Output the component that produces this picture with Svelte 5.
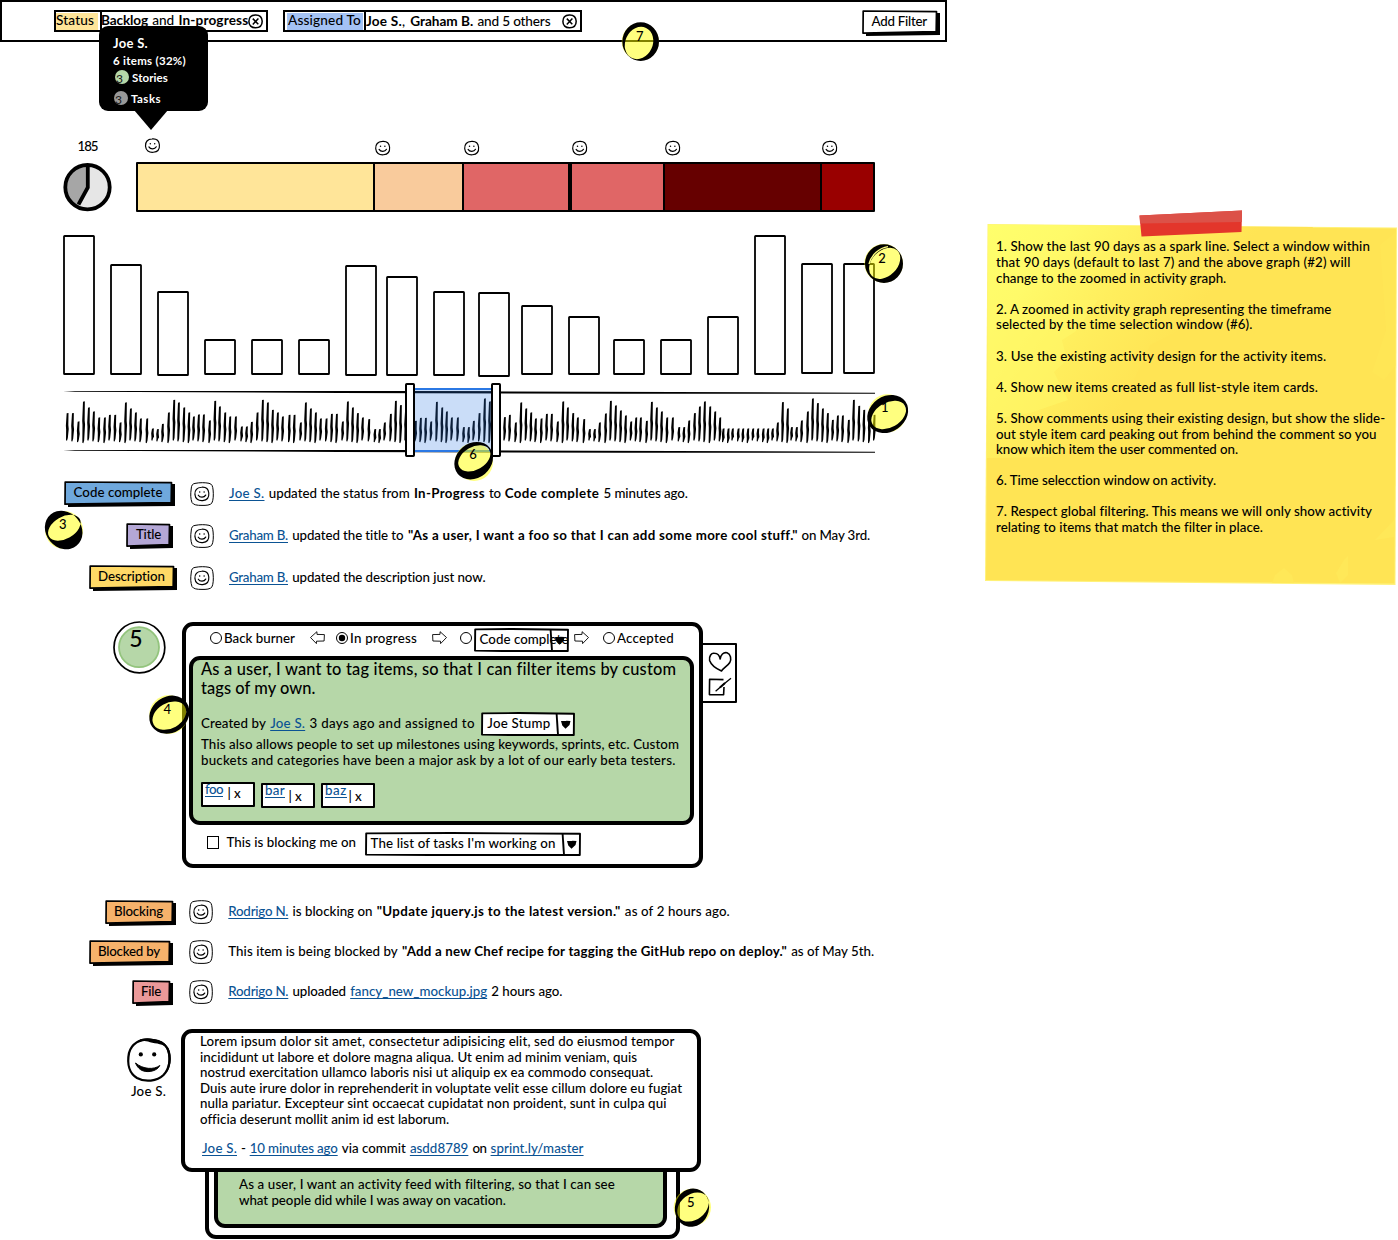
<script>
  // Spreads the letters of a run so that it spans the given width.
  function fit(node, width) {
    const apply = (w) => {
      node.style.letterSpacing = '0px';
      const range = document.createRange();
      range.selectNodeContents(node);
      const natural = range.getBoundingClientRect().width;
      node.style.letterSpacing = `${(w - natural) / Math.max(1, node.textContent.length)}px`;
    };
    apply(width);
    return { update: apply };
  }

  const segments = [
    { w: 237, color: '#ffe599' },
    { w: 89, color: '#f9cb9c' },
    { w: 108, color: '#e06666', thick: true },
    { w: 93, color: '#e06666' },
    { w: 157, color: '#660000' },
    { w: 51, color: '#990000' },
  ];
  const faces = [[16.5, 7.5], [246.7, 10], [335.7, 10], [443.7, 10], [536.7, 10], [693.7, 10]];

  // Columns of the zoomed graph: left, top, bottom
  const columns = [
    [0, 0, 140], [47, 29, 140], [94, 56, 141], [141, 104, 140], [188, 104, 140], [235, 104, 140],
    [282, 30, 141], [323, 41, 141], [370, 56, 141], [415, 57, 142], [458, 70, 140], [505, 81, 140],
    [550, 104, 140], [597, 104, 140], [644, 81, 140], [691, 0, 140], [738, 28, 139], [780, 28, 139],
  ];

  // Spark line ticks: x and top, in thirds of a pixel
  const early = [
    [82,580],[98,580],[115,605],[131,545],[146,563],[161,575],[177,593],[194,593],[209,585],[225,585],[241,608],[257,548],[272,566],[287,578],[302,596],[321,596],[338,626],[353,628],[368,612],[386,578],[402,540],[416,548],[432,563],[447,578],[461,590],[476,584],[491,584],[509,602],[525,543],[539,560],[555,578],[570,590],[587,590],[605,620],[620,620],[635,606],[652,578],[668,540],[683,548],[698,570],[713,578],[728,590],[748,585],[763,585],[782,608],[797,548],[812,566],[827,578],[842,596],[859,596],[875,582],[890,582],[908,605],[923,545],[938,563],[953,580],[968,593],[987,598],[1005,628],[1019,628],[1034,608],[1052,582],[1067,543],[1082,556],[1097,575],[1127,603],[1142,594],[1157,594],[1173,605],[1190,546],[1206,563],[1220,575],[1235,593],[1253,593],[1271,622],[1286,622],[1301,603],[1318,580],[1334,536],[1349,545],
  ];
  const late = [
    [104,592],[119,585],[137,608],[153,548],[168,566],[183,578],[197,596],[214,596],[230,582],[245,582],[263,605],[279,545],[293,563],[309,580],[323,593],[342,598],[359,628],[374,628],[389,608],[407,581],[422,543],[437,557],[452,572],[467,587],[483,605],[498,593],[512,593],[530,603],[545,546],[560,563],[575,575],[591,593],[608,593],[627,622],[642,622],[657,602],[674,580],[689,560],[704,545],[720,560],[735,575],[750,593],[760,626],[775,626],[788,626],[805,626],[819,626],[834,626],[849,626],[864,626],[880,626],[894,626],[908,626],[923,608],[938,547],[953,566],[965,622],[980,622],[995,602],[1013,575],[1028,536],[1043,550],[1058,566],[1073,580],[1088,600],[1103,587],[1118,587],[1136,600],[1151,540],[1167,558],[1182,570],[1198,585],[1213,585],
  ];
  const ticks = [...early, ...late.map(([x, y]) => [x + 1290, y])];
  // A pen stroke: fuller in the middle, thin at the foot
  const tick = ([x, top], i) => {
    const end = 662 + (i % 4) * 2.5;
    const mid = (top + end) / 2;
    return `M${x - 2} ${top}L${x + 3.5} ${top - 1}L${x + 3} ${mid - 6}L${x + 4.2} ${mid + 6}L${x + 1.5} ${end - 8}L${x - 1} ${end}L${x - 4} ${end - 1}L${x - 3.6} ${mid + 8}L${x - 4.4} ${mid - 4}Z`;
  };

  const recent = [
    { tag: 'Code complete', tw: 89, tx: 9.5, x: 64, w: 111, color: '#6fa8dc', runs: [['Joe S.', 35.5, 'a'], ['updated the status from', 141], ['In-Progress', 71, 'b'], ['to', 11.5], ['Code complete', 94.5, 'b'], ['5 minutes ago.', 84.5]] },
    { tag: 'Title', tw: 25, tx: 10, x: 126, w: 47, color: '#b4a7d6', runs: [['Graham B.', 59, 'a'], ['updated the title to', 111.5], ['"As a user, I want a foo so that I can add some more cool stuff."', 389.5, 'b'], ['on May 3rd.', 68.5]] },
    { tag: 'Description', tw: 67, tx: 9, x: 89, w: 88, color: '#ffd966', runs: [['Graham B.', 59, 'a'], ['updated the description just now.', 193.5]] },
  ];
  const older = [
    { tag: 'Blocking', tw: 49, tx: 9, x: 105, w: 71, color: '#f6b26b', runs: [['Rodrigo N.', 60, 'a'], ['is blocking on', 80], ['"Update jquery.js to the latest version."', 244, 'b'], ['as of 2 hours ago.', 105]] },
    { tag: 'Blocked by', tw: 62, tx: 9, x: 89, w: 84, color: '#f6b26b', runs: [['This item is being blocked by', 169.5], ['"Add a new Chef recipe for tagging the GitHub repo on deploy."', 385, 'b'], ['as of May 5th.', 83]] },
    { tag: 'File', tw: 20, tx: 9, x: 132, w: 41, color: '#ea9999', runs: [['Rodrigo N.', 60, 'a'], ['uploaded', 53.5], ['fancy_new_mockup.jpg', 137, 'a'], ['2 hours ago.', 71]] },
  ];

  const notes = [
    [['1. Show the last 90 days as a spark line. Select a window within', 374], ['that 90 days (default to last 7) and the above graph (#2) will', 354.5], ['change to the zoomed in activity graph.', 230.5]],
    [['2. A zoomed in activity graph representing the timeframe', 336], ['selected by the time selection window (#6).', 257]],
    [['3. Use the existing activity design for the activity items.', 331]],
    [['4. Show new items created as full list-style item cards.', 322]],
    [['5. Show comments using their existing design, but show the slide-', 389.5], ['out style item card peaking out from behind the comment so you', 380.5], ['know which item the user commented on.', 242]],
    [['6. Time selecction window on activity.', 220.5]],
    [['7. Respect global filtering. This means we will only show activity', 376], ['relating to items that match the filter in place.', 267]],
  ];

  const lorem = [
    ['Lorem ipsum dolor sit amet, consectetur adipisicing elit, sed do eiusmod tempor', 474.5],
    ['incididunt ut labore et dolore magna aliqua. Ut enim ad minim veniam, quis', 437],
    ['nostrud exercitation ullamco laboris nisi ut aliquip ex ea commodo consequat.', 453.5],
    ['Duis aute irure dolor in reprehenderit in voluptate velit esse cillum dolore eu fugiat', 482],
    ['nulla pariatur. Excepteur sint occaecat cupidatat non proident, sunt in culpa qui', 466.5],
    ['officia deserunt mollit anim id est laborum.', 248.5],
  ];
  const commit = [['Joe S.', 35, 'a'], ['-', 4.5], ['10 minutes ago', 88, 'a'], ['via commit', 64], ['asdd8789', 58.5, 'a'], ['on', 14], ['sprint.ly/master', 93, 'a']];

  const tags = [
    { name: 'foo', w: 18, gap: 4.5, x: 13, drop: 4, top: 0 },
    { name: 'bar', w: 20, gap: 3.5, x: 13, drop: 6, top: 1 },
    { name: 'baz', w: 22, gap: 1.5, x: 13, drop: 6, top: 1 },
  ];

  // Numbered callouts in thirds of a pixel; ellipses are cx, cy, rx, ry, rotation
  const callouts = [
    { n: 7, left: 620, top: 20, box: [240, 60], c: [301, 125, 56], t: [299, 122], outer: [302, 125, 55, 58, 0], inner: [297, 129, 41, 50, 25] },
    { n: 2, left: 863, top: 243, box: [1179, 69], c: [1241, 130, 58], t: [1236, 129], outer: [1242, 131, 57, 58, 0], inner: [1244, 130, 54, 38, -45], extra: 'M1201 136C1208 108 1232 88 1258 84' },
    { n: 1, left: 867, top: 393, box: [1191, 519], c: [1252, 580, 57], t: [1244, 576], outer: [1253, 582, 65, 53, -35], inner: [1256, 585, 56, 37, -30] },
    { n: 6, left: 454, top: 441, box: [-48, 663], c: [12, 726, 57], t: [9, 718], outer: [11, 722, 62, 52, -40], inner: [13, 715, 52, 34, -30] },
    { n: 3, left: 44, top: 509, box: [12, 117], c: [72, 180, 57], t: [68, 177], outer: [71, 180, 61, 53, -130], inner: [73, 173, 53, 33, -30] },
    { n: 4, left: 148, top: 694, box: [24, 42], c: [86, 104, 58], t: [82, 101], outer: [88, 104, 63, 54, -35], inner: [88, 107, 54, 38, -30] },
    { n: 5, left: 671, top: 1187, box: [633, 501], c: [697, 562, 56], t: [692, 560], outer: [696, 563, 51, 58, 15], inner: [699, 561, 52, 38, -38] },
  ];
  const ellipse = ([cx, cy, rx, ry, rot]) => {
    const a = (rot * Math.PI) / 180;
    const dx = rx * Math.cos(a);
    const dy = rx * Math.sin(a);
    return `M${cx - dx} ${cy - dy}A${rx} ${ry} ${rot} 1 0 ${cx + dx} ${cy + dy}A${rx} ${ry} ${rot} 1 0 ${cx - dx} ${cy - dy}Z`;
  };
</script>

{#snippet run(text, w, kind)}
  <span class="run" class:bold={kind === 'b'} class:link={kind === 'a'} style:width="{w}px" use:fit={w}>{text}</span>
{/snippet}

{#snippet button(text, tw, tx, w, color)}
  <div class="sketch" style:width="{w}px">
    <svg width={w} height="26" viewBox="0 0 {w} 26">
      <path d="M4 21L{w - 4} 20L{w - 4} 3L{w} 3L{w} 25L4 26Z" />
      <path d="M1.2 1L{w - 3.5} 1.6L{w - 3.8} 21.6L1 23.2Z" fill={color} stroke="#000" stroke-width="1.7" stroke-linejoin="round" />
    </svg>
    <span class="sketch-text" style:padding-left="{tx}px">{@render run(text, tw)}</span>
  </div>
{/snippet}

{#snippet select(text, tw, w)}
  <div class="sketch select" style:width="{w}px">
    <svg width={w} height="24" viewBox="0 0 {w} 24">
      <path d="M1.2 1.4L{w * 0.4} 1L{w - 1} 1.8L{w - 1.2} 23L{w * 0.3} 23L1 22.6Z" fill="#fff" stroke="#000" stroke-width="1.9" stroke-linejoin="round" />
      <path d="M{w - 18.4} 1.5L{w - 17} 23" stroke="#000" stroke-width="1.9" />
      <path d="M{w - 14} 9C{w - 12} 8.6 {w - 10} 9.6 {w - 8.5} 8.8L{w - 4.5} 9L{w - 5.5} 13L{w - 9.5} 16.8L{w - 12.7} 13.5Z" />
    </svg>
    <span class="sketch-text">{@render run(text, tw)}</span>
  </div>
{/snippet}

{#snippet face()}
  <path d="M7.2.8C11.4.4 14 2.4 14.5 6.6C14.9 11 12.4 13.8 8.4 14.2C4 14.6 1 12.4.6 8C.4 3.4 3 1.1 7.2.8Z" fill="#fff" stroke="#000" stroke-width="1.15" />
  <circle cx="5.4" cy="5.7" r=".75" /><circle cx="9.8" cy="5.7" r=".75" />
  <path d="M4 8.8C5.5 11.3 9.8 11.5 11.4 8.7" fill="none" stroke="#000" stroke-width="1.2" stroke-linecap="round" />
{/snippet}

{#snippet activity(items)}
  {#each items as item}
    <div class="activity">
      <div class="tag-cell" style:padding-left="{item.x}px">
        {@render button(item.tag, item.tw, item.tx, item.w, item.color)}
      </div>
      <svg class="portrait" width="24" height="24" viewBox="0 0 24 24">
        <path d="M5 1.4C10 .4 15 .5 19 1.3C22 2 22.7 4 23.1 8C23.6 13 23.3 18 22 20.8C20.5 23.3 16 23.5 12 23.4C7 23.4 3.5 23 2 20.5C.6 17 .4 12 1.2 7C1.4 3.5 2.2 1.9 5 1.4Z" fill="#fff" stroke="#000" stroke-width="1" />
        <g transform="translate(4.3 4.4)">{@render face()}</g>
      </svg>
      <p class="runs">{#each item.runs as [t, w, k]}{@render run(t, w, k)}{/each}</p>
    </div>
  {/each}
{/snippet}

{#snippet radio(on)}
  <svg class="radio" width="12" height="14" viewBox="0 0 12 14">
    <circle cx="6" cy="7" r="5.5" fill="#fff" stroke="#000" />
    {#if on}<circle cx="6" cy="7" r="3.2" />{/if}
  </svg>
{/snippet}

{#snippet arrow(flip)}
  <svg class="arrow" class:flip width="15" height="14" viewBox="0 0 15 14">
    <path d="M.6 3.6L8 3.4L8.1.7L14.5 6.5L8.6 12.6L8.5 10.2L.9 10Z" fill="#fff" stroke="#000" stroke-width=".9" />
  </svg>
{/snippet}

{#snippet close()}
  <svg class="close" width="15" height="15" viewBox="0 0 15 15">
    <path d="M7.2.9C11.6.7 14 3 14.2 7.2C14.2 11.4 11.6 13.7 7.6 13.8C3.4 13.9.9 11.4.9 7.4C.9 3.4 3.2 1.1 7.2.9Z" fill="#fff" stroke="#000" stroke-width="1.5" />
    <path d="M4.8 4.6L10.3 10.2M10.4 4.4L4.8 10.4" stroke="#000" stroke-width="1.5" />
  </svg>
{/snippet}

<div class="page">
  <main>
    <header>
      <div class="filter status">
        <span class="label">{@render run('Status', 38)}</span>
        <i class="divider"></i>
        <span class="value">{@render run('Backlog', 47, 'b')}{@render run('and', 22)}{@render run('In-progress', 70, 'b')}</span>
        {@render close()}
      </div>
      <div class="filter assigned">
        <span class="label">{@render run('Assigned To', 73)}</span>
        <i class="divider"></i>
        <span class="value"><span class="names">{@render run('Joe S.', 36, 'b')}{@render run(',', 4)}</span>{@render run('Graham B.', 63, 'b')}{@render run('and 5 others', 73)}</span>
        {@render close()}
      </div>
      <div class="add">{@render button('Add Filter', 55.5, 9.5, 78, '#fff')}</div>
      <div class="tooltip">
        <div class="tip-name">{@render run('Joe S.', 35)}</div>
        <div>{@render run('6 items (32%)', 73)}</div>
        <div class="count"><i class="dot green">3</i>{@render run('Stories', 36)}</div>
        <div class="count"><i class="dot gray">3</i>{@render run('Tasks', 30)}</div>
      </div>
    </header>

    <section class="summary">
      <div class="total">
        {@render run('185', 20)}
        <svg width="49" height="49" viewBox="0 0 49 49">
          <circle cx="24.5" cy="24.5" r="22.3" fill="#e6e6e6" />
          <path d="M24.7 24.5L24.7 2A22.3 22.3 0 0 0 15 44Z" fill="#a6a6a6" />
          <circle cx="24.5" cy="24.2" r="22.2" fill="none" stroke="#000" stroke-width="3.8" />
          <path d="M24.8 3V24.5L15.5 41.5" fill="none" stroke="#000" stroke-width="3.8" />
        </svg>
      </div>
      <div class="people">
        <svg width="739" height="24" viewBox="0 0 739 24">
          {#each faces as [x, y]}
            <g transform="translate({x - 7.6} {y - 7.4})">{@render face()}</g>
          {/each}
        </svg>
        <div class="stack">
          {#each segments as s}
            <div class="segment" class:thick={s.thick} style:width="{s.w}px" style:background={s.color}></div>
          {/each}
        </div>
      </div>
    </section>

    <svg class="columns" width="813" height="142" viewBox="0 0 813 142">
      {#each columns as [x, top, bottom]}
        <rect x={x + 1} y={top + 1} width="30" height={bottom - top - 2} rx=".6" fill="#fff" stroke="#000" stroke-width="1.8" />
      {/each}
    </svg>

    <svg class="spark" width="812" height="74" viewBox="69 489 2436 222">
      <path d="M69 513L1100 513L1900 516L2505 518V521L1750 521L900 519L105 515Z" />
      <path d="M69 690L1100 690L1900 693L2505 695V698L1750 698L900 696L105 692Z" />
      <g>
        {#each ticks as t, i}<path d={tick(t, i)} />{/each}
      </g>
      <rect x="1122" y="504" width="234" height="192" fill="#2b78e4" fill-opacity=".25" />
      <path d="M1122 507H1356M1122 693H1356" stroke="#2b78e4" stroke-width="6" />
      <path d="M1122 516H1356" stroke="#0b1e39" stroke-width="5" />
      <rect x="1098" y="492" width="24" height="216" rx="2" fill="#fff" stroke="#000" stroke-width="6" />
      <rect x="1356" y="492" width="24" height="216" rx="2" fill="#fff" stroke="#000" stroke-width="6" />
    </svg>

    <section class="feed recent">{@render activity(recent)}</section>

    <section class="story">
      <svg class="score" width="53" height="53" viewBox="0 0 53 53">
        <circle cx="26.4" cy="26.4" r="25.4" fill="#fff" stroke="#000" stroke-width="1.7" />
        <circle cx="26" cy="26.2" r="20" fill="#b6d7a8" stroke="#93c47d" stroke-width="1.8" />
        <text x="23" y="25.5" text-anchor="middle" font-size="23">5</text>
      </svg>
      <article class="card">
        <div class="states">
          {@render radio()}<span class="a1">{@render run('Back burner', 71)}</span>
          <span class="a2">{@render arrow(true)}</span>
          <span class="a3">{@render radio(true)}</span><span class="a1">{@render run('In progress', 67)}</span>
          <span class="a4">{@render arrow()}</span>
          <span class="a5">{@render radio()}</span><span class="a6">{@render select('Code complete', 89, 95)}</span>
          <span class="a7">{@render arrow()}</span>
          <span class="a8">{@render radio()}</span><span class="a1">{@render run('Accepted', 57)}</span>
        </div>
        <div class="body">
          <h2>
            {@render run('As a user, I want to tag items, so that I can filter items by custom', 475)}
            {@render run('tags of my own.', 114.5)}
          </h2>
          <div class="meta">
            {@render run('Created by', 65)}{@render run('Joe S.', 35, 'a')}{@render run('3 days ago and assigned to', 165.5)}
            <span class="assignee">{@render select('Joe Stump', 63, 94)}</span>
          </div>
          <div class="lines">
            {@render run('This also allows people to set up milestones using keywords, sprints, etc. Custom', 478)}
            {@render run('buckets and categories have been a major ask by a lot of our early beta testers.', 474.5)}
          </div>
          <div class="tags">
            {#each tags as t}
              <span class="tag" style:margin-top="{t.top}px">
                {@render run(t.name, t.w, 'a')}
                <span class="remove" style:margin-left="{t.gap}px" style:padding-top="{t.drop}px">{@render run('| x', t.x)}</span>
              </span>
            {/each}
          </div>
        </div>
        <div class="blocking">
          <i class="checkbox"></i>
          {@render run('This is blocking me on', 129.5)}
          {@render select("The list of tasks I'm working on", 185, 216)}
        </div>
      </article>
      <aside>
        <svg width="24" height="48" viewBox="0 0 24 48" fill="none" stroke="#000" stroke-width="1.6" stroke-linejoin="round">
          <path d="M13.5 20C9 18 3.5 15 1.6 9.5C.8 5 3.5 1.6 6.4 2.3C9.5 2.4 11.6 4.6 12.2 8C12.6 3.8 15.5 1 19 1.8C22.8 3.2 23.6 8 21.8 11.5C19.5 15 16 16.6 13.5 20Z" />
          <path d="M15.5 28.6L1.6 28.2L1.4 43.6L15.6 43.8L16 36" />
          <path d="M7.6 40.2L16.5 32.5L23 27.2" stroke-width="1.3" />
          <path d="M12 36.5L17 32" stroke-width="1.9" />
        </svg>
      </aside>
    </section>

    <section class="feed older">{@render activity(older)}</section>

    <section class="comment">
      <div class="author">
        <svg width="46" height="46" viewBox="0 0 46 46">
          <path d="M24 2.6C14 1.6 5.5 6.5 3 16C.8 27 3.5 36.5 11 41C19 45.4 31 44.4 37.5 38C44 31 45.4 20 41.5 11.5C38.5 5.6 32 3.4 24 2.6Z" fill="#fff" stroke="#000" stroke-width="2.3" />
          <path d="M14 2.6C20 1 29 1 36 4.4C40 7 42.5 10 44 15C45.4 23 44.6 30 41 35L40.5 33C43.4 25 43 16 39.5 10C36 6.4 27 6.6 22 4.6C19 3.6 16 4 14 5Z" />
          <circle cx="14.8" cy="17.4" r="2.1" /><circle cx="28.2" cy="17.4" r="2.1" />
          <path d="M9.5 26C12 32 16 34.6 22 34.6C28 34.4 32 32 33.8 28.5C28 33 17 32.4 9.5 26Z" stroke="#000" stroke-width="1" stroke-linejoin="round" />
        </svg>
        {@render run('Joe S.', 35)}
      </div>
      <div class="thread">
        <article class="bubble">
          <div class="lines">{#each lorem as [t, w]}{@render run(t, w)}{/each}</div>
          <p class="runs">{#each commit as [t, w, k]}{@render run(t, w, k)}{/each}</p>
        </article>
        <div class="behind">
          <div class="lines">
            {@render run('As a user, I want an activity feed with filtering, so that I can see', 376)}
            {@render run('what people did while I was away on vacation.', 267)}
          </div>
        </div>
      </div>
    </section>
  </main>

  <aside class="note">
    <svg class="paper" width="414" height="378" viewBox="984 209 414 378">
      <defs>
        <linearGradient id="sun" x1="0" y1="0" x2="1" y2=".55">
          <stop offset="0" stop-color="#ffff6c" /><stop offset=".2" stop-color="#fffa69" />
          <stop offset=".42" stop-color="#ffee5d" /><stop offset=".65" stop-color="#ffe454" />
        </linearGradient>
      </defs>
      <path d="M987.5 224L1397 227.5L1395.5 585L985 581Z" fill="#fff27a" />
      <path d="M988.5 225L1396 228.5L1394.5 583.5L986 580Z" fill="#ffe454" />
      <path d="M988 224.5L1313 227L1300 262L1270 275L1262 292L1220 300L1180 330L1150 345L1120 410L1140 443L1060 452L1050 457L987 458Z" fill="url(#sun)" />
      <path d="M988 300L1098 300L1075 332L1062 340L1067 360L1054 372L1068 400L1030 413L988 420Z" fill="#fff868" opacity=".55" />
      <path d="M1380 245L1396 232V365L1384 380L1372 372L1386 330Z" fill="#ffe858" opacity=".4" />
      <path d="M1275 575L1284 568L1292 575L1294 583H1272ZM1336 573L1344 560L1348 556V575L1340 583ZM1375 540L1394 520V537Z" fill="#ffe858" />
      <path d="M1139.5 215.5L1242 210.5L1241.5 232L1141.5 236.5Z" fill="#e3362b" />
      <path d="M1139.5 215.5L1242 210.5L1241.8 222L1140 223.5Z" fill="#dc5148" />
    </svg>
    <div class="note-text">
      {#each notes as para}
        <p>{#each para as [t, w]}{@render run(t, w)}{/each}</p>
      {/each}
    </div>
  </aside>

  {#each callouts as c}
    <svg class="callout" style:left="{c.left}px" style:top="{c.top}px" width="42" height="42" viewBox="{c.box[0]} {c.box[1]} 126 126">
      <circle cx={c.c[0]} cy={c.c[1]} r={c.c[2]} fill="#ff0" fill-opacity=".5" />
      <path d={ellipse(c.outer) + ellipse(c.inner)} fill-rule="evenodd" />
      {#if c.extra}<path d={c.extra} fill="none" stroke="#ffff80" stroke-width="4" transform="translate(-4 -4)" />{/if}
      <text x={c.t[0]} y={c.t[1]} text-anchor="middle" font-size="39">{c.n}</text>
    </svg>
  {/each}
</div>

<style>
  :global(body) { background: #fff; }
  .page { position: relative; display: flex; width: 1398px; height: 1240px; overflow: hidden; font: 500 13.3px/16px Lato, "Open Sans", sans-serif; color: #000; }
  .page *, .page { box-sizing: border-box; }
  svg { display: block; flex: none; overflow: visible; }
  p, h2 { margin: 0; font-size: inherit; font-weight: inherit; }
  main { width: 947px; flex: none; }
  .run { display: block; flex: none; white-space: pre; }
  .bold { font-weight: 700; }
  .link { color: #0b5394; text-decoration: underline; text-decoration-thickness: 1px; text-underline-offset: 2px; text-decoration-skip-ink: none; }
  .runs { display: flex; gap: 4.2px; line-height: inherit; }

  header { position: relative; display: flex; gap: 15px; width: 947px; height: 42px; padding: 8px 5px 0 52px; border: 2px solid #000; }
  .filter { display: flex; height: 22px; border: 2px solid #000; font-size: 13.6px; }
  .status { width: 214px; }
  .assigned { width: 299px; }
  .label { height: 17px; margin-top: 1px; line-height: 14px; flex: none; }
  .status .label { width: 42px; background: #ffe599; }
  .assigned .label { width: 76px; margin-left: 2px; padding-left: 1px; background: #a4c2f4; }
  .divider { width: 2px; background: #000; margin-left: 2px; flex: none; }
  .assigned .divider { margin-left: 1px; }
  .value { display: flex; gap: 4.2px; margin-left: -1px; }
  .assigned .value { margin-left: 0; line-height: 18px; }
  .names { display: flex; }
  .close { margin: 1.5px 0 0; }
  .assigned .close { margin-left: 11.5px; }
  .add { margin-left: auto; }

  .tooltip { position: absolute; left: 97px; top: 24px; width: 109px; height: 85px; padding: 7px 0 0 14px; border-radius: 9px; background: #000; color: #fff; font-size: 11.5px; font-weight: 700; z-index: 2; }
  .tooltip::after { content: ""; position: absolute; left: 34.5px; top: 84px; border: 17.5px solid transparent; border-top: 20px solid #000; border-bottom: 0; }
  .tip-name { font-size: 13px; line-height: 20px; }
  .count { display: flex; align-items: center; gap: 3px; padding-left: 2px; height: 17px; }
  .count + .count { margin: 4px 0 0 -1px; }
  .dot { width: 14px; height: 14px; border-radius: 50%; color: #222; font-style: normal; font-weight: 500; font-size: 12px; line-height: 17px; padding-left: 1px; margin-top: -2px; }
  .green { background: #b6d7a8; }
  .gray { background: #999; }

  .summary { display: flex; margin: 96px 0 0 63px; height: 74px; }
  .total { width: 49px; display: flex; flex-direction: column; align-items: center; gap: 9px; }
  .people { margin-left: 24px; }
  .stack { display: flex; width: 739px; height: 50px; border: 2px solid #000; border-radius: 1px; }
  .segment { border-right: 2px solid #000; }
  .segment.thick { border-right-width: 4px; }
  .segment:last-child { border-right: 0; }
  .columns { margin: 23px 0 0 63px; }
  .spark { margin: 6px 0 0 63px; }

  .feed { display: flex; flex-direction: column; }
  .recent { margin-top: 24px; gap: 18px; }
  .older { margin-top: 31px; gap: 16px; }
  .activity { display: flex; height: 24px; line-height: 24px; }
  .tag-cell { width: 190px; flex: none; }
  .older .tag-cell { padding-top: 1px; }
  .older .portrait { margin-left: -1px; }
  .portrait { margin: 1px 15px 0 0; }
  .older .runs { margin-left: .3px; }
  .sketch { display: grid; line-height: 22px; }
  .sketch > * { grid-area: 1 / 1; }
  .sketch-text { z-index: 1; }
  .select .sketch-text { padding-left: 6px; }

  .story { display: flex; margin: 33px 0 0 113px; height: 246px; }
  .score { margin-top: -1px; }
  .card { width: 520.5px; margin-left: 16px; border: 4px solid #000; border-radius: 11px; background: #fff; flex: none; }
  .states { display: flex; height: 30px; padding-left: 24px; line-height: 24px; }
  .states svg.radio, .states svg.arrow { margin-top: 5px; }
  .flip { transform: scaleX(-1); }
  .a1 { margin-left: 2px; }
  .a2 { margin-left: 15px; }
  .a3 { margin-left: 11px; }
  .a4 { margin-left: 15px; }
  .a5 { margin-left: 12.5px; }
  .a6 { margin: 2px 0 0 2px; }
  .a7 { margin-left: 5px; }
  .a8 { margin-left: 14.5px; }
  .body { width: 505px; height: 169px; margin-left: 3px; padding-left: 8px; border: 4px solid #000; border-radius: 11px; background: #b6d7a8; display: flex; flex-direction: column; }
  h2 { font-size: 16.4px; line-height: 19.4px; margin-top: -1px; }
  .meta { display: flex; gap: 4.2px; margin-top: 14px; height: 24px; line-height: 22px; }
  .assignee { margin-left: 2.3px; }
  .lines { line-height: 15.6px; }
  .body .lines { line-height: 16px; }
  .tags { display: flex; gap: 6px; margin-top: 14px; }
  .tag { display: flex; width: 54px; height: 25px; padding-left: 2px; border: 2px solid #000; border-radius: 1px; background: #fff; line-height: 11px; }
  .remove { line-height: 10px; }
  .blocking { display: flex; margin: 7px 0 0 20.5px; line-height: 20px; }
  .checkbox { width: 12px; height: 13px; margin: 4px 8px 0 0; border: 1.5px solid #000; }
  .blocking .select { margin-left: 8.5px; }
  .story aside { width: 36px; height: 60px; margin: 21px 0 0 -1.5px; padding: 6px 0 0 4.5px; border: 2px solid #000; border-radius: 1px; }

  .comment { display: flex; margin: 26px 0 0 126px; }
  .author { width: 55px; padding-top: 8px; flex: none; }
  .author .run { margin: 0 0 0 5px; }
  .bubble { position: relative; z-index: 1; width: 520px; height: 143px; padding: 1px 0 0 15px; border: 4px solid #000; border-radius: 11px; background: #fff; }
  .bubble .runs { margin: 11px 0 0 2px; line-height: 18px; gap: 4.1px; }
  .behind { width: 475px; height: 71px; margin: -4px 0 0 24px; padding: 0 9px 7px 5px; border: 4px solid #000; border-top: 0; border-radius: 0 0 11px 11px; }
  .behind .lines { height: 60px; padding: 8px 0 0 21px; border: 4px solid #000; border-top: 0; border-radius: 0 0 11px 11px; background: #b6d7a8; line-height: 16px; }

  .note { display: grid; align-self: flex-start; margin: 209px 0 0 37px; }
  .note > * { grid-area: 1 / 1; }
  .note-text { padding: 30.4px 0 0 12px; line-height: 15.6px; z-index: 1; }
  .note-text p + p { margin-top: 15.6px; }
  .callout { position: absolute; z-index: 3; }
</style>
